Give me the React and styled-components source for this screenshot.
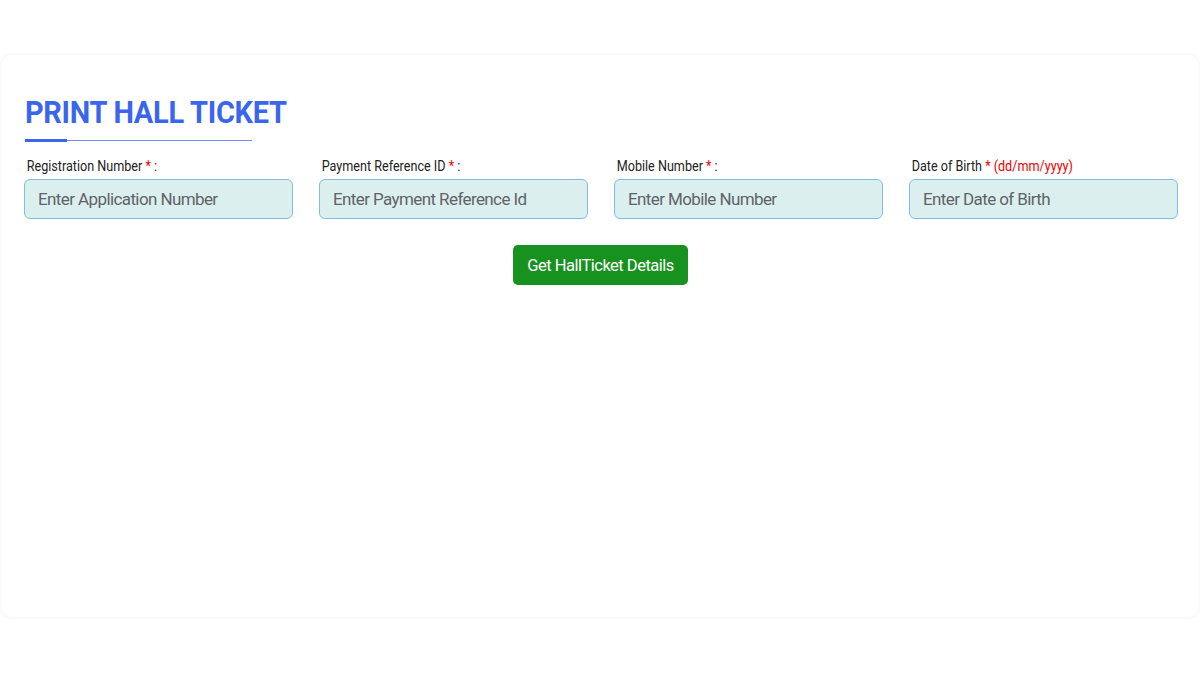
import React from 'react';
import styled, { createGlobalStyle } from 'styled-components';

const GlobalStyle = createGlobalStyle`
  html, body {
    margin: 0;
    padding: 0;
    background: #fff;
    font-family: Roboto, "Liberation Sans", sans-serif;
  }
`;

const Page = styled.div`
  width: 1200px;
  height: 675px;
  padding-top: 55px;
  box-sizing: border-box;
`;

const Card = styled.div`
  margin: 0 1px;
  height: 562px;
  background: #fff;
  border-radius: 10px;
  box-shadow: 0 0 4px rgba(0, 0, 0, 0.07);
  padding: 40px 22px 0 23px;
  box-sizing: border-box;
`;

// the source font is a condensed cut, so squeeze the headline a little
const Title = styled.h2`
  margin: 0;
  padding-left: 1px;
  color: #3a66ee;
  font-size: 31px;
  font-weight: 700;
  letter-spacing: -0.3px;
  line-height: 36px;
  transform: scaleX(0.935);
  transform-origin: left center;
`;

const Underline = styled.div`
  position: relative;
  width: 227px;
  height: 1px;
  margin: 9px 0 0 1px;
  background: #6f90f0;

  &::before {
    content: '';
    position: absolute;
    left: 0;
    top: -1px;
    width: 42px;
    height: 3px;
    background: #3a66ee;
  }
`;

const FieldRow = styled.div`
  display: grid;
  grid-template-columns: repeat(4, 269px);
  column-gap: 26px;
  margin-top: 16px;
`;

const Field = styled.div`
  display: flex;
  flex-direction: column;
  align-items: flex-start;
`;

const Label = styled.label`
  display: inline-block;
  font-size: 14px;
  color: #222;
  padding-left: 3px;
  line-height: 18px;
  margin-bottom: 4px;
  white-space: nowrap;
  transform: scaleX(0.9);
  transform-origin: left center;
`;

const Star = styled.span`
  color: #f20000;
`;

const Input = styled.input`
  width: 100%;
  height: 40px;
  box-sizing: border-box;
  border: 1px solid #7fbcea;
  border-radius: 6px;
  background: #dcefef;
  padding: 0 13px;
  font-family: Roboto, "Liberation Sans", sans-serif;
  font-size: 17px;
  letter-spacing: -0.6px;
  outline: none;

  &::placeholder {
    color: #5f6368;
  }
`;

const Actions = styled.div`
  display: flex;
  justify-content: center;
  margin-top: 26px;
`;

const Button = styled.button`
  height: 40px;
  padding: 0 14px;
  border: none;
  border-radius: 5px;
  background: #18921f;
  color: #fff;
  font-family: Roboto, "Liberation Sans", sans-serif;
  font-size: 16.5px;
  letter-spacing: -0.5px;
  cursor: pointer;
`;

const fields = [
  { label: 'Registration Number', note: ' :', placeholder: 'Enter Application Number' },
  { label: 'Payment Reference ID', note: ' :', placeholder: 'Enter Payment Reference Id' },
  { label: 'Mobile Number', note: ' :', placeholder: 'Enter Mobile Number' },
  { label: 'Date of Birth', note: '', extra: ' (dd/mm/yyyy)', placeholder: 'Enter Date of Birth' },
];

export default function App() {
  return (
    <>
      <GlobalStyle />
      <Page>
        <Card>
          <Title>PRINT HALL TICKET</Title>
          <Underline />
          <FieldRow>
            {fields.map((f) => (
              <Field key={f.label}>
                <Label>
                  {f.label} <Star>*{f.extra}</Star>{f.note}
                </Label>
                <Input placeholder={f.placeholder} />
              </Field>
            ))}
          </FieldRow>
          <Actions>
            <Button>Get HallTicket Details</Button>
          </Actions>
        </Card>
      </Page>
    </>
  );
}
